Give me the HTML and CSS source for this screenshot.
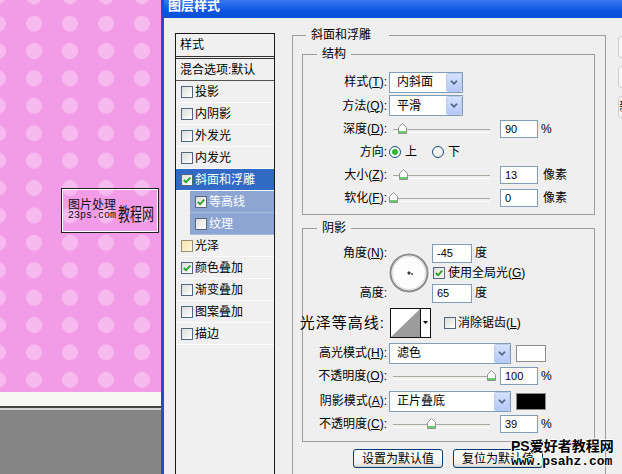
FILE: index.html
```html
<!DOCTYPE html>
<html lang="zh-CN">
<head>
<meta charset="UTF-8">
<title>图层样式</title>
<link rel="stylesheet" href="styles.css">
</head>
<body>
<div class="screen">

  <div class="doc">
    <div class="canvas">
      <div class="stamp">
        <div class="stamp-text"><span>图片处理</span><span class="mono">23ps.com</span></div>
        <span class="stamp-big">教程网</span>
      </div>
    </div>
    <div class="doc-foot"></div>
  </div>

  <div class="dialog">
    <div class="titlebar">图层样式</div>
    <div class="dialog-body">

      <div class="styles">
        <div class="styles-head">样式</div>
        <div class="item blend">混合选项:默认</div>
        <div class="item"><i class="cb"></i>投影</div>
        <div class="item"><i class="cb"></i>内阴影</div>
        <div class="item"><i class="cb"></i>外发光</div>
        <div class="item"><i class="cb"></i>内发光</div>
        <div class="item on"><i class="cb"><svg viewBox="0 0 11 11"><path d="M2 5.5 4.5 8 9 3"/></svg></i>斜面和浮雕</div>
        <div class="item sub"><i class="cb"><svg viewBox="0 0 11 11"><path d="M2 5.5 4.5 8 9 3"/></svg></i>等高线</div>
        <div class="item sub"><i class="cb"></i>纹理</div>
        <div class="item"><i class="cb warm"></i>光泽</div>
        <div class="item"><i class="cb"><svg viewBox="0 0 11 11"><path d="M2 5.5 4.5 8 9 3"/></svg></i>颜色叠加</div>
        <div class="item"><i class="cb"></i>渐变叠加</div>
        <div class="item"><i class="cb"></i>图案叠加</div>
        <div class="item"><i class="cb"></i>描边</div>
      </div>

      <div class="panel">
        <fieldset class="outer">
          <legend>斜面和浮雕</legend>

          <fieldset class="group struct">
            <legend>结构</legend>
            <div class="row tall">
              <span class="lbl">样式(<u>T</u>):</span>
              <div class="select"><span>内斜面</span><b class="drop"><svg viewBox="0 0 16 19"><path d="M4.5 7.5 8 11 11.5 7.5"/></svg></b></div>
            </div>
            <div class="row">
              <span class="lbl">方法(<u>Q</u>):</span>
              <div class="select"><span>平滑</span><b class="drop"><svg viewBox="0 0 16 19"><path d="M4.5 7.5 8 11 11.5 7.5"/></svg></b></div>
            </div>
            <div class="row">
              <span class="lbl">深度(<u>D</u>):</span>
              <div class="slider"><svg class="thumb" style="left:9px" viewBox="0 0 9 11"><path d="M4.5.5 8.5 4.5v6h-8v-6z"/><path class="g" d="M1 9h7"/></svg></div>
              <span class="num">90</span><span class="unit">%</span>
            </div>
            <div class="row">
              <span class="lbl">方向:</span>
              <i class="radio on"></i><span class="opt">上</span>
              <i class="radio gap"></i><span class="opt">下</span>
            </div>
            <div class="row">
              <span class="lbl">大小(<u>Z</u>):</span>
              <div class="slider"><svg class="thumb" style="left:10px" viewBox="0 0 9 11"><path d="M4.5.5 8.5 4.5v6h-8v-6z"/><path class="g" d="M1 9h7"/></svg></div>
              <span class="num">13</span><span class="unit px">像素</span>
            </div>
            <div class="row">
              <span class="lbl">软化(<u>F</u>):</span>
              <div class="slider"><svg class="thumb" style="left:0" viewBox="0 0 9 11"><path d="M4.5.5 8.5 4.5v6h-8v-6z"/><path class="g" d="M1 9h7"/></svg></div>
              <span class="num">0</span><span class="unit px">像素</span>
            </div>
          </fieldset>

          <fieldset class="group shade">
            <legend>阴影</legend>
            <div class="angle">
              <span class="lbl a1">角度(<u>N</u>):</span>
              <div class="dial">
                <svg viewBox="0 0 40 40"><circle cx="20" cy="20" r="18.5" class="ring"/><circle cx="20" cy="20" r="16.5" class="face"/><path class="mark" d="M19 19h2v2h-2zM22 21h2M23 20v2"/></svg>
              </div>
              <div class="a-ctl a1"><span class="num wide">-45</span><span class="unit">度</span></div>
              <div class="a-ctl a2"><i class="cb"><svg viewBox="0 0 11 11"><path d="M2 5.5 4.5 8 9 3"/></svg></i><span>使用全局光(<u>G</u>)</span></div>
              <span class="lbl a3">高度:</span>
              <div class="a-ctl a3"><span class="num wide">65</span><span class="unit">度</span></div>
            </div>
            <div class="row contour">
              <span class="lbl big">光泽等高线:</span>
              <svg class="curve" viewBox="0 0 41 30"><rect x=".5" y=".5" width="40" height="29" fill="#fff" stroke="#111"/><path d="M1 29 30 1v28z" fill="#9c9c9c"/><path d="M30.5 1v28" stroke="#111"/><path d="M33 13h5l-2.5 3z" fill="#000"/></svg>
              <i class="cb"></i><span>消除锯齿(<u>L</u>)</span>
            </div>
            <div class="row mode">
              <span class="lbl">高光模式(<u>H</u>):</span>
              <div class="select long"><span>滤色</span><b class="drop"><svg viewBox="0 0 16 19"><path d="M4.5 7.5 8 11 11.5 7.5"/></svg></b></div>
              <span class="swatch"></span>
            </div>
            <div class="row">
              <span class="lbl">不透明度(<u>O</u>):</span>
              <div class="slider"><svg class="thumb" style="left:98px" viewBox="0 0 9 11"><path d="M4.5.5 8.5 4.5v6h-8v-6z"/><path class="g" d="M1 9h7"/></svg></div>
              <span class="num">100</span><span class="unit">%</span>
            </div>
            <div class="row mode m2">
              <span class="lbl">阴影模式(<u>A</u>):</span>
              <div class="select long"><span>正片叠底</span><b class="drop"><svg viewBox="0 0 16 19"><path d="M4.5 7.5 8 11 11.5 7.5"/></svg></b></div>
              <span class="swatch dark"></span>
            </div>
            <div class="row">
              <span class="lbl">不透明度(<u>C</u>):</span>
              <div class="slider"><svg class="thumb" style="left:38px" viewBox="0 0 9 11"><path d="M4.5.5 8.5 4.5v6h-8v-6z"/><path class="g" d="M1 9h7"/></svg></div>
              <span class="num">39</span><span class="unit">%</span>
            </div>
          </fieldset>

          <div class="actions">
            <span class="btn">设置为默认值</span>
            <span class="btn">复位为默认值</span>
          </div>
        </fieldset>
      </div>

      <div class="side">
        <span class="btn">确定</span>
        <span class="btn">取消</span>
        <span class="btn">新建样式(W)...</span>
      </div>
    </div>
  </div>

  <div class="watermark">
    <span>PS爱好者教程网</span>
    <span class="url">www.psahz.com</span>
  </div>
</div>
</body>
</html>
```

FILE: styles.css
```css
* {
  box-sizing: border-box;
}

body {
  margin: 0;
  font: 12px/14px "Liberation Sans", "Noto Sans CJK SC", sans-serif;
  color: #000;
}

.screen {
  display: flex;
  width: 622px;
  height: 474px;
  overflow: hidden;
  position: relative;
}

/* ---- document window ---- */
.doc {
  width: 161px;
  flex: none;
  display: flex;
  flex-direction: column;
}

.canvas {
  height: 392px;
  flex: none;
  position: relative;
  background-color: #f29be7;
  background-image: radial-gradient(circle, #f6baef 0 7.5px, rgba(246, 186, 239, 0) 8.5px);
  background-size: 36px 27.4px;
  background-position: 16px 10px;
}

.doc-foot {
  flex: 1;
  background: linear-gradient(#f7f7f3 0 14px, #444 14px 16px, #d4d4d4 16px 18px, #858585 18px);
}

.stamp {
  position: absolute;
  left: 61px;
  top: 188px;
  width: 98px;
  height: 45px;
  border: 1px solid #222;
  box-shadow: inset 0 0 0 1px #fff;
  display: flex;
  align-items: flex-end;
  padding: 0 0 10px 6px;
  color: #111;
  font-family: "Noto Sans CJK SC", sans-serif;
}

.stamp-text {
  display: flex;
  flex-direction: column;
  line-height: 13px;
}

.mono {
  font: 10px/12px "Liberation Mono", monospace;
}

.stamp-big {
  display: inline-block;
  margin-left: 2px;
  transform: scaleY(1.5);
  transform-origin: bottom;
  line-height: 12px;
}

/* ---- dialog ---- */
.dialog {
  flex: 1;
  min-height: 0;
  display: flex;
  flex-direction: column;
  border-left: 3px solid #1c4fd6;
  background: #efefef;
}

.titlebar {
  height: 18px;
  flex: none;
  padding-left: 4px;
  background: linear-gradient(#3a78f2, #0a55e0 60%, #0a4fd6);
  color: #fff;
  font-weight: bold;
  font-size: 13px;
  line-height: 12px;
}

.dialog-body {
  flex: 1;
  min-height: 0;
  display: flex;
  padding: 10px 0 0 11px;
}

.styles {
  width: 100px;
  flex: none;
  margin-top: 5px;
  border: 1px solid #1a1a1a;
  border-bottom: none;
  background: #f0f0f0;
}

.styles-head {
  height: 25px;
  padding-left: 4px;
  line-height: 22px;
  border-bottom: 3px double #333;
}

.item {
  height: 22px;
  display: flex;
  align-items: center;
  padding-left: 5px;
  border-bottom: 1px solid #fcfcfc;
}

.item .cb {
  margin-right: 2px;
}

.blend {
  padding-left: 4px;
  border-bottom-color: #555;
}

.item.on {
  background: #316ac5;
  color: #fff;
}

.item.sub {
  margin-left: 14px;
  padding-left: 5px;
  background: #8da5d2;
  color: #fff;
  border-bottom-color: #a9bce0;
}

.cb {
  width: 12px;
  height: 12px;
  flex: none;
  display: inline-block;
  border: 1px solid #55667e;
  background: linear-gradient(135deg, #dcdcd7, #fff);
}

.cb svg {
  display: block;
  width: 10px;
  height: 10px;
  fill: none;
  stroke: #21a121;
  stroke-width: 2;
}

.cb.warm {
  background: linear-gradient(135deg, #f8e4a8, #fdf6de);
  border-color: #9a8f70;
}

/* ---- settings panel ---- */
.panel {
  width: 314px;
  flex: none;
  margin-left: 17px;
}

fieldset {
  margin: 0;
  min-width: 0;
  border: 1px solid #9d9d9d;
}

legend {
  padding: 0 5px;
  line-height: 14px;
}

.outer {
  width: 314px;
  height: 480px;
  padding: 5px 10px 0 9px;
}

.outer > legend {
  margin-left: 4px;
  padding-right: 18px;
}

.group {
  width: 293px;
  padding: 9px 0 5px 0;
}

.group > legend {
  margin-left: 14px;
}

.shade {
  margin-top: 6px;
  padding-top: 8px;
  padding-bottom: 6px;
}

.row {
  height: 23px;
  display: flex;
  align-items: center;
  white-space: nowrap;
}

.row.tall {
  height: 24px;
}

.lbl {
  width: 86px;
  flex: none;
  display: flex;
  justify-content: flex-end;
  padding-right: 2px;
  white-space: nowrap;
}

.lbl.big {
  padding-right: 4px;
  font-size: 15px;
  letter-spacing: 1px;
}

u {
  text-decoration-thickness: 1px;
  text-underline-offset: 1px;
}

.select {
  width: 74px;
  height: 21px;
  display: flex;
  align-items: center;
  padding-left: 7px;
  border: 1px solid #7f9db9;
  background: #fff;
}

.select.long {
  width: 122px;
}

.drop {
  margin-left: auto;
  width: 16px;
  height: 19px;
  border: 1px solid #b9cbf3;
  border-radius: 2px;
  background: linear-gradient(#d6e2fd, #b5c9f6);
}

.drop svg {
  display: block;
  width: 14px;
  height: 17px;
  fill: none;
  stroke: #4d6185;
  stroke-width: 2;
}

.slider {
  position: relative;
  width: 105px;
  height: 11px;
  flex: none;
}

.slider::before {
  content: "";
  position: absolute;
  left: 4px;
  right: 4px;
  top: 6px;
  height: 2px;
  border-top: 1px solid #aaa79f;
  border-bottom: 1px solid #fff;
}

.thumb {
  position: absolute;
  top: 0;
  width: 9px;
  height: 11px;
  fill: #fff;
  stroke: #8a968a;
}

.thumb .g {
  stroke: #6ccb6c;
  stroke-width: 2;
}

.num {
  width: 38px;
  height: 18px;
  margin-left: 6px;
  padding-left: 4px;
  border: 1px solid #7f9db9;
  background: #fff;
  font-size: 11px;
  line-height: 16px;
}

.num.wide {
  width: 40px;
  height: 19px;
  margin-left: 0;
  line-height: 17px;
}

.unit {
  margin-left: 3px;
}

.unit.px {
  margin-left: 5px;
}

.radio {
  width: 12px;
  height: 12px;
  margin-right: 4px;
  flex: none;
  border: 1px solid #1c5180;
  border-radius: 50%;
  background: radial-gradient(circle at 40% 40%, #fff, #e1e1da);
}

.radio.on {
  background: radial-gradient(circle, #2eb82e 0 2.5px, #8ed48e 3px, #fff 3.6px, #e6e6e0);
}

.radio.gap {
  margin-left: 15px;
}

.angle {
  display: grid;
  grid-template-columns: 86px 43px 1fr;
  grid-template-rows: 20px 20px 20px;
  align-items: center;
}

.a1 {
  grid-row: 1;
}

.a2 {
  grid-row: 2;
  grid-column: 3;
}

.a3 {
  grid-row: 3;
}

.lbl.a1, .lbl.a3 {
  grid-column: 1;
}

.a-ctl {
  grid-column: 3;
  display: flex;
  align-items: center;
  white-space: nowrap;
}

.a2 .cb {
  margin: 0 3px 0 1px;
}

.dial {
  grid-column: 2;
  grid-row: 1 / 4;
  width: 40px;
  height: 40px;
}

.dial svg {
  display: block;
  width: 40px;
  height: 40px;
}

.dial .ring {
  fill: #fdfdfd;
  stroke: #8c8c8c;
  stroke-width: 2;
}

.dial .face {
  fill: none;
  stroke: #dcdcdc;
}

.dial .mark {
  fill: #222;
  stroke: #444;
}

.contour {
  height: 31px;
  margin-top: 4px;
}

.curve {
  width: 41px;
  height: 30px;
  margin: 0 13px 0 1px;
  flex: none;
}

.contour .cb {
  margin-right: 2px;
}

.mode {
  height: 22px;
  margin-top: 4px;
}

.mode.m2 {
  margin-top: 3px;
}

.swatch {
  width: 30px;
  height: 17px;
  margin-left: 5px;
  border: 1px solid #8d8d8d;
  background: #fff;
}

.swatch.dark {
  background: #000;
}

.actions {
  display: flex;
  gap: 10px;
  margin: 7px 0 0 51px;
}

.btn {
  width: 90px;
  height: 19px;
  flex: none;
  display: flex;
  align-items: center;
  justify-content: center;
  border: 1px solid #003c74;
  border-radius: 3px;
  background: linear-gradient(#fff, #f1f0ea 80%, #d8d2c6);
  white-space: nowrap;
}

.side {
  margin: 8px 0 0 12px;
  display: flex;
  flex-direction: column;
  gap: 8px;
}

.side .btn {
  width: 80px;
  height: 22px;
  border-color: #cfcfcf;
  background: #f6f6f6;
}

/* ---- site watermark ---- */
.watermark {
  position: absolute;
  left: 511px;
  top: 439px;
  display: flex;
  flex-direction: column;
  color: #000;
  font-weight: bold;
  font-size: 14px;
  line-height: 15px;
  text-shadow: 1px 0 #fff, -1px 0 #fff, 0 1px #fff, 0 -1px #fff;
}

.watermark .url {
  font: bold 13px/15px "Liberation Mono", monospace;
}
```
